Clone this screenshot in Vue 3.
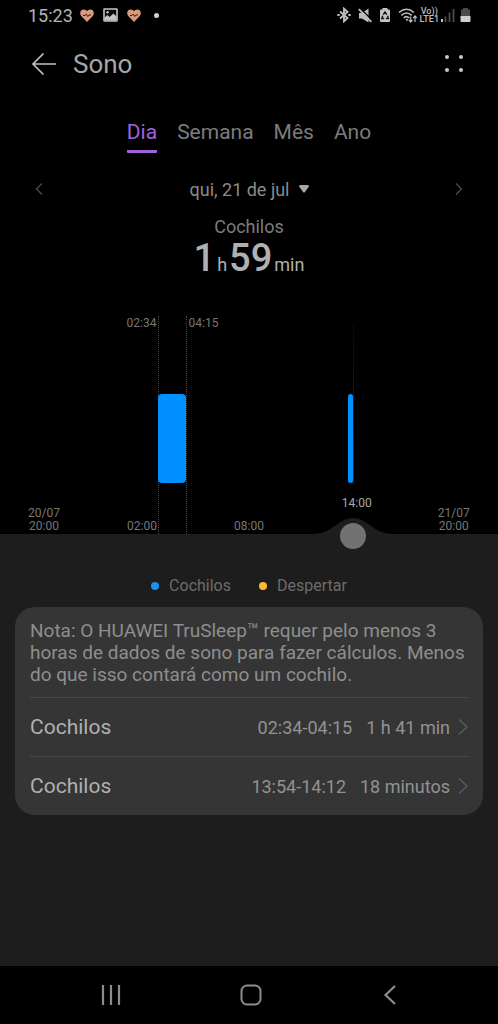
<script setup>
import { ref } from 'vue'

const tabs = ['Dia', 'Semana', 'Mês', 'Ano']
const activeTab = ref('Dia')

// Minutes counted from 20:00 of the previous day.
const DAY = 1440
const cursor = ref(1096)
const pct = (minutes) => `${(minutes / DAY) * 100}%`

const naps = [
  { range: '02:34-04:15', duration: '1 h 41 min', start: 394, length: 101 },
  { range: '13:54-14:12', duration: '18 minutos', start: 1076, length: 18 },
]
const ticks = [
  { date: '20/07', time: '20:00', at: -18 },
  { time: '02:00', at: 335 },
  { time: '08:00', at: 720 },
  { date: '21/07', time: '20:00', at: 1457 },
]
</script>

<template>
  <div class="screen">
    <div class="status">
      <span class="clock">15:23</span>
      <div class="notices">
        <svg width="14" height="13" viewBox="0 0 14 13">
          <path d="M7 13 L1.2 7 C-.8 4.500 .3 .5 3.600 .5 C5.200 .5 6.400 1.300 7 2.300 C7.600 1.300 8.800 .5 10.400 .5 C13.700 .5 14.800 4.500 12.800 7 Z" fill="#d89a78" />
          <path d="M3 6.500 H5 L6.200 5 L7.800 7.500 L9 6 H11" fill="none" stroke="#3a2018" stroke-width="1" />
        </svg>
        <svg width="15" height="14" viewBox="0 0 15 14">
          <rect x="1" y="1" width="13" height="12" rx=".5" fill="#0a0a0a" stroke="#c4c4c4" stroke-width="1.600" />
          <path d="M1.500 12.500 V9.500 L4.500 7 L6.500 9 L10.500 5.500 L13.500 8.500 V12.500 Z" fill="#c4c4c4" />
          <circle cx="4.500" cy="4.300" r="1.200" fill="#c4c4c4" />
        </svg>
        <svg width="14" height="13" viewBox="0 0 14 13">
          <path d="M7 13 L1.2 7 C-.8 4.500 .3 .5 3.600 .5 C5.200 .5 6.400 1.300 7 2.300 C7.600 1.300 8.800 .5 10.400 .5 C13.700 .5 14.800 4.500 12.800 7 Z" fill="#d89a78" />
          <path d="M3 6.500 H5 L6.200 5 L7.800 7.500 L9 6 H11" fill="none" stroke="#3a2018" stroke-width="1" />
        </svg>
        <span class="more-dot"></span>
      </div>
      <div class="system">
        <svg width="14" height="16" viewBox="0 0 14 16" fill="none" stroke="#bdbdbd" stroke-width="1.900">
          <path d="M3 4.500 L10.500 11 L7 14.300 V1.700 L10.500 5 L3 11.500" />
          <path d="M.3 8 H2.700 M11.300 8 H13.700" stroke-width="2" />
        </svg>
        <svg width="14" height="15" viewBox="0 0 14 15">
          <path d="M1 5 H4 L10.500 .5 V14.500 L4 10.500 H1 Z" fill="#bdbdbd" />
          <path d="M1.800 0 L14 12" stroke="#000" stroke-width="1.400" />
          <path d="M.8 1.200 L13.300 13.800" stroke="#bdbdbd" stroke-width="1.900" />
        </svg>
        <svg width="12" height="16" viewBox="0 0 12 16">
          <path d="M3.500 1 H8.500 V2.500 H10 Q11 2.500 11 3.500 V14 Q11 15 10 15 H2 Q1 15 1 14 V3.500 Q1 2.500 2 2.500 H3.500 Z" fill="#c4c4c4" />
          <path d="M4.200 7.600 L6 5 L7.800 7.600 M8.600 8.800 L9.300 11.500 H7 M5.200 11.500 H2.800 L3.700 8.800" fill="none" stroke="#111" stroke-width="1.400" />
        </svg>
        <svg width="20" height="15" viewBox="0 0 20 15" fill="none" stroke="#bdbdbd" stroke-width="1.600">
          <path d="M1 4.500 Q8.500 -2 16 4.500" />
          <path d="M3.300 7.300 Q8.500 2.700 13.700 7.300" />
          <path d="M5.700 10 Q8.500 7.300 11.300 10" />
          <path d="M8.500 11 L9.500 12.500" stroke-width="2" />
          <path d="M12.700 8.500 V13.500 M11 12 L12.700 14 L14.400 12" stroke-width="1.200" />
          <path d="M17 14 V8.500 M15.300 10 L17 8 L18.700 10" stroke-width="1.200" />
        </svg>
        <span class="lte"><span>Vo))</span><span>LTE1</span></span>
        <svg class="signal" width="14" height="15" viewBox="0 0 14 15">
          <rect x="0" y="11" width="2" height="3" fill="#c4c4c4" />
          <path d="M4.500 14 V8.500 M8.500 14 V4.500 M12.500 14 V1" stroke="#4c4c4c" stroke-width="1.800" />
        </svg>
        <svg class="battery" width="11" height="16" viewBox="0 0 11 16">
          <path d="M3 1 H8 V2.500 H10 V9.500 H1 V2.500 H3 Z" fill="#4a4a4a" />
          <path d="M.5 9 H10.500 V14 Q10.500 15 9.500 15 H1.500 Q.5 15 .5 14 Z" fill="#cecece" />
        </svg>
      </div>
    </div>

    <header class="top">
      <button class="icon" aria-label="Voltar">
        <svg width="26" height="24" viewBox="0 0 26 24" fill="none" stroke="#c0c0c0" stroke-width="1.700">
          <path d="M25 12 H2 M12.500 1.500 L2 12 L12.500 22.500" />
        </svg>
      </button>
      <h1>Sono</h1>
      <button class="icon" aria-label="Mais opções">
        <svg width="20" height="20" viewBox="0 0 20 20" fill="#c8c8c8">
          <circle cx="3" cy="3" r="2" /><circle cx="17" cy="3" r="2" />
          <circle cx="3" cy="16" r="2" /><circle cx="17" cy="16" r="2" />
        </svg>
      </button>
    </header>

    <nav class="tabs">
      <button v-for="t in tabs" :key="t" :class="{ active: t === activeTab }" @click="activeTab = t">{{ t }}</button>
    </nav>

    <div class="dates">
      <button class="icon" aria-label="Dia anterior">
        <svg width="8" height="14" viewBox="0 0 8 14" fill="none" stroke="#4a4a4a" stroke-width="1.400"><path d="M7 1.500 L1.500 7 L7 12.500" /></svg>
      </button>
      <button class="date">
        qui, 21 de jul
        <svg width="10" height="8" viewBox="0 0 10 8"><path d="M1 0 H9 Q10.500 .5 9.500 2 L6 7 Q5 8 4 7 L.5 2 Q-.5 .5 1 0 Z" fill="#a8a8a8" /></svg>
      </button>
      <button class="icon" aria-label="Próximo dia">
        <svg width="8" height="14" viewBox="0 0 8 14" fill="none" stroke="#4a4a4a" stroke-width="1.400"><path d="M1 1.500 L6.500 7 L1 12.500" /></svg>
      </button>
    </div>

    <div class="summary">
      <div class="kind">Cochilos</div>
      <div class="total"><b>1</b><span>h</span><b>59</b><span>min</span></div>
    </div>

    <section class="chart">
      <div class="plot">
        <div class="bound start" :style="{ left: pct(394) }"><span>02:34</span></div>
        <div class="bound end" :style="{ left: pct(495) }"><span>04:15</span></div>
        <div class="cursor-line" :style="{ left: pct(cursor) }"></div>
        <div
          v-for="n in naps"
          :key="n.range"
          class="bar"
          :style="{ left: pct(n.start), width: pct(n.length) }"
        ></div>
        <div v-for="t in ticks" :key="t.at" class="tick" :style="{ left: pct(t.at) }">
          <span v-if="t.date">{{ t.date }}</span><span>{{ t.time }}</span>
        </div>
        <div class="cursor-time" :style="{ left: pct(cursor + 12) }">14:00</div>
        <svg class="hump" :style="{ left: pct(cursor) }" width="80" height="17" viewBox="0 0 80 17">
          <path d="M0 17 C20 17 25 1 40 1 C55 1 60 17 80 17 Z" fill="#1d1d1d" />
        </svg>
        <input v-model.number="cursor" class="slider" type="range" min="0" max="1440" aria-label="Horário" />
      </div>
    </section>

    <main class="panel">
      <div class="legend">
        <span><i class="nap"></i>Cochilos</span>
        <span><i class="wake"></i>Despertar</span>
      </div>
      <div class="card">
        <p>Nota: O HUAWEI TruSleep™ requer pelo menos 3 horas de dados de sono para fazer cálculos. Menos do que isso contará como um cochilo.</p>
        <button v-for="n in naps" :key="n.range" class="row">
          <span class="name">Cochilos</span>
          <span>{{ n.range }}</span>
          <span class="duration">{{ n.duration }}</span>
          <svg width="10" height="18" viewBox="0 0 10 18" fill="none" stroke="#5c5c5c" stroke-width="1.500"><path d="M1 1.500 L9 9 L1 16.500" /></svg>
        </button>
      </div>
    </main>

    <footer class="system-nav">
      <button class="icon" aria-label="Recentes">
        <svg width="22" height="22" viewBox="0 0 22 22" stroke="#8c8c8c" stroke-width="2.200"><path d="M3 1 V21 M11 1 V21 M19 1 V21" /></svg>
      </button>
      <button class="icon" aria-label="Início">
        <svg width="22" height="22" viewBox="0 0 22 22" fill="none" stroke="#8c8c8c" stroke-width="2"><rect x="1.500" y="1.500" width="19" height="19" rx="5.500" /></svg>
      </button>
      <button class="icon" aria-label="Voltar ao anterior">
        <svg width="22" height="22" viewBox="0 0 22 22" fill="none" stroke="#8c8c8c" stroke-width="2.200"><path d="M16 2 L6.500 11 L16 20" /></svg>
      </button>
    </footer>
  </div>
</template>

<style>
body { background: #000; }
</style>

<style scoped>
.screen {
  min-height: 100vh;
  display: flex;
  flex-direction: column;
  background: #000;
  color: #8a8a8a;
  font-family: Roboto, "Liberation Sans", sans-serif;
}
.screen * { box-sizing: border-box; }
svg { display: block; flex: none; }
button {
  padding: 0;
  border: 0;
  background: none;
  color: inherit;
  font: inherit;
  cursor: pointer;
}
.icon { display: flex; align-items: center; justify-content: center; }
.status {
  height: 32px;
  padding: 0 27px 2px 28px;
  display: flex;
  align-items: center;
}
.clock { font-size: 18px; color: #b4b4b4; }
.notices { display: flex; align-items: center; gap: 9px; margin-left: 7px; }
.more-dot { width: 5px; height: 5px; margin-left: 4px; border-radius: 50%; background: #d0d0d0; }
.system { display: flex; align-items: center; gap: 7px; margin-left: auto; }
.lte {
  display: flex;
  flex-direction: column;
  align-items: center;
  margin: 0 -1px 0 -5px;
  font-size: 9px;
  line-height: 8px;
  font-weight: 500;
  color: #bdbdbd;
}
.signal { margin-left: -4px; }
.battery { margin-left: -2px; }
.top {
  height: 64px;
  padding: 0 34px 0 31px;
  display: flex;
  align-items: center;
  gap: 16px;
}
h1 { flex: 1; margin: 0; font-size: 26px; font-weight: 400; color: #a6a6a6; }
.tabs {
  margin-top: 20px;
  display: flex;
  justify-content: center;
  gap: 20px;
  font-size: 21px;
  line-height: 32px;
  color: #7c7c7c;
}
.tabs button {
  height: 37px;
  padding-bottom: 2px;
  border-bottom: 3px solid transparent;
}
.tabs .active { color: #a062dc; border-color: #a062dc; border-radius: 1px; }
.dates {
  margin-top: 24px;
  padding: 0 35px;
  height: 24px;
  display: flex;
  align-items: center;
  justify-content: space-between;
  font-size: 18px;
}
.date { display: flex; align-items: center; gap: 9px; }
.summary { margin-top: 15px; text-align: center; }
.kind { font-size: 18px; line-height: 22px; color: #7c7c7c; }
.total {
  height: 42px;
  display: flex;
  justify-content: center;
  align-items: baseline;
  gap: 2px;
  line-height: 40px;
  font-size: 18px;
  color: #b0b0b0;
}
.total b { font-size: 38px; font-weight: 500; }
.chart { margin-top: 36px; padding: 0 49px; font-size: 12px; line-height: 13px; color: #777; }
.plot { position: relative; height: 218px; }
.bound {
  position: absolute;
  top: 0;
  bottom: 0;
  border-left: 1px dotted #484848;
}
.bound span { position: absolute; top: 1px; }
.start span { right: 3px; }
.end { margin-left: -1px; }
.end span { left: 2px; }
.cursor-line {
  position: absolute;
  top: 8px;
  height: 160px;
  width: 1px;
  background: linear-gradient(#080810, #24243f);
}
.bar { position: absolute; top: 78px; height: 89px; border-radius: 4px; background: #0090ff; }
.tick {
  position: absolute;
  bottom: 1px;
  display: flex;
  flex-direction: column;
  align-items: center;
  transform: translateX(-50%);
}
.cursor-time { position: absolute; top: 181px; transform: translateX(-50%); color: #a8a8a8; }
.hump { position: absolute; bottom: 0; transform: translateX(-50%); }
.slider {
  position: absolute;
  left: -13px;
  bottom: -15px;
  width: calc(100% + 26px);
  height: 26px;
  margin: 0;
  appearance: none;
  background: none;
}
.slider::-webkit-slider-thumb {
  appearance: none;
  width: 26px;
  height: 26px;
  border-radius: 50%;
  background: #727272;
}
.panel { flex: 1; padding: 41px 15px 0; background: #1d1d1d; }
.legend {
  display: flex;
  justify-content: center;
  gap: 28px;
  font-size: 16px;
  line-height: 22px;
  color: #6c6c6c;
}
.legend span { display: flex; align-items: center; gap: 10px; }
.legend i { width: 8px; height: 8px; border-radius: 50%; }
.nap { background: #1990f0; }
.wake { background: #fbba30; }
.card {
  margin-top: 10px;
  padding: 13px 15px 0;
  border-radius: 20px;
  background: #353535;
}
.card p { margin: 0 0 11px; font-size: 19px; line-height: 22px; color: #8e8e8e; }
.row {
  width: 100%;
  height: 59px;
  display: flex;
  align-items: center;
  border-top: 1px solid #484848;
  font-size: 18px;
  color: #929292;
}
.name { flex: 1; text-align: left; font-size: 21px; color: #b0b0b0; }
.duration { margin: 0 8px 0 14px; }
.system-nav {
  height: 58px;
  padding: 0 97px 0 100px;
  display: flex;
  align-items: center;
  justify-content: space-between;
}
</style>
